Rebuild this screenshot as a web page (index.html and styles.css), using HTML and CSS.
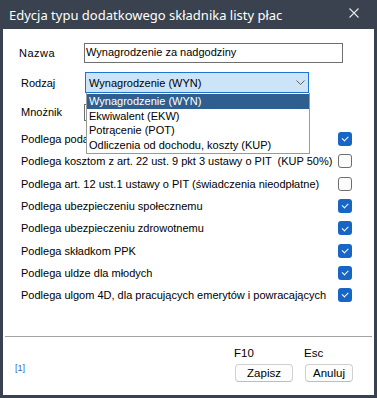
FILE: index.html
```html
<!doctype html>
<html lang="pl">
  <head>
    <meta charset="UTF-8" />
    <meta name="viewport" content="width=device-width, initial-scale=1.0" />
    <title>Edycja typu dodatkowego składnika listy płac</title>
    <link rel="stylesheet" href="styles.css">
  </head>
  <body>

    <div class="window">
      <div class="title-bar">
        <span class="title">Edycja typu dodatkowego składnika listy płac</span>
        <svg class="close" width="10" height="10" viewBox="0 0 10 10">
          <path d="M0.5 0.5 L9.5 9.5 M9.5 0.5 L0.5 9.5" stroke="#e6e8eb" stroke-width="1.1" fill="none" />
        </svg>
      </div>

      <div class="content">
        <div class="form-row row-name">
          <span class="label label-name">Nazwa</span>
          <div class="text-box name-box">Wynagrodzenie za nadgodziny</div>
        </div>

        <div class="form-row row-kind">
          <span class="label">Rodzaj</span>
          <div class="select-box">
            <span>Wynagrodzenie (WYN)</span>
            <svg width="9" height="5" viewBox="0 0 9 5">
              <path d="M0.5 0.5 L4.5 4.5 L8.5 0.5" stroke="#606060" stroke-width="1" fill="none" />
            </svg>
          </div>
          <!-- open dropdown lies over the rows below -->
          <div class="dropdown">
            <div class="option selected">Wynagrodzenie (WYN)</div>
            <div class="option">Ekwiwalent (EKW)</div>
            <div class="option">Potrącenie (POT)</div>
            <div class="option">Odliczenia od dochodu, koszty (KUP)</div>
          </div>
        </div>

        <div class="form-row row-mult">
          <span class="label">Mnożnik</span>
          <div class="text-box mult-box"></div>
        </div>

        <div class="checks">
          <div class="check-row">
            <span>Podlega podatkowi dochodowemu</span>
            <span class="check on"></span>
          </div>
          <div class="check-row">
            <span>Podlega kosztom z art. 22 ust. 9 pkt 3 ustawy o PIT &nbsp;(KUP 50%)</span>
            <span class="check"></span>
          </div>
          <div class="check-row">
            <span>Podlega art. 12 ust.1 ustawy o PIT (świadczenia nieodpłatne)</span>
            <span class="check"></span>
          </div>
          <div class="check-row">
            <span>Podlega ubezpieczeniu społecznemu</span>
            <span class="check on"></span>
          </div>
          <div class="check-row">
            <span>Podlega ubezpieczeniu zdrowotnemu</span>
            <span class="check on"></span>
          </div>
          <div class="check-row">
            <span>Podlega składkom PPK</span>
            <span class="check on"></span>
          </div>
          <div class="check-row">
            <span>Podlega uldze dla młodych</span>
            <span class="check on"></span>
          </div>
          <div class="check-row">
            <span>Podlega ulgom 4D, dla pracujących emerytów i powracających</span>
            <span class="check on"></span>
          </div>
        </div>

        <div class="separator"></div>

        <div class="footer">
          <span class="page-tag">[1]</span>
          <div class="actions">
            <div class="action">
              <span class="key">F10</span>
              <button class="btn btn-save">Zapisz</button>
            </div>
            <div class="action">
              <span class="key">Esc</span>
              <button class="btn btn-cancel">Anuluj</button>
            </div>
          </div>
        </div>
      </div>
    </div>

  </body>
</html>
```

FILE: styles.css
```css
body {
  margin: 0;
  background-color: #39424e;
  font-family: "Liberation Sans", Arial, sans-serif;
  font-size: 11px;
  color: #000000;
}

.window {
  width: 377px;
  height: 398px;
  background-color: #39424e;
  display: flex;
  flex-direction: column;
}

.title-bar {
  height: 29px;
  display: flex;
  align-items: center;
  justify-content: space-between;
  padding: 0 18px 0 9px;
}
.title {
  font-family: "Noto Sans", sans-serif;
  font-size: 13px;
  color: #ffffff;
  margin-top: 1px;
}
.close {
  margin-top: -3px;
}

.content {
  flex: 1;
  margin: 0 3px 3px 3px;
  background-color: #ffffff;
  padding: 14px 22px 0 18px;
  display: flex;
  flex-direction: column;
}

.form-row {
  display: flex;
  align-items: center;
  position: relative;
}
.label {
  width: 63px;
}
.label-name {
  margin-left: -2px;
  width: 65px;
  letter-spacing: 0.5px;
}

.text-box {
  box-sizing: border-box;
  border: 1px solid #6f6f6f;
  padding: 0 2px;
  line-height: 18px;
}
.row-name {
  height: 20px;
}
.name-box {
  width: 259px;
  height: 20px;
  line-height: 17px;
  padding-left: 1px;
}

.row-kind {
  height: 21px;
  margin-top: 9px;
}
.select-box {
  box-sizing: border-box;
  width: 224px;
  height: 21px;
  margin-left: 1px;
  background-color: #cce4f7;
  border: 1px solid #1f73d1;
  display: flex;
  align-items: center;
  justify-content: space-between;
  padding: 0 3px 0 3px;
}

.dropdown {
  position: absolute;
  left: 65px;
  top: 21px;
  width: 224px;
  box-sizing: border-box;
  background-color: #ffffff;
  border: 1px solid #9a9a9a;
  border-top: none;
  padding: 1px 0 1px 0;
  z-index: 2;
}
.option {
  height: 14.5px;
  line-height: 14.5px;
  padding-left: 2px;
}
.option.selected {
  background-color: #2f5f8f;
  color: #ffffff;
}

.row-mult {
  height: 18px;
  margin-top: 10px;
}
.mult-box {
  width: 120px;
  height: 17px;
}

.checks {
  margin-top: 7px;
}
.check-row {
  height: 22.3px;
  display: flex;
  align-items: center;
  justify-content: space-between;
  white-space: nowrap;
}
.check {
  box-sizing: border-box;
  flex-shrink: 0;
  width: 14px;
  height: 14px;
  border: 1px solid #6e6e6e;
  border-radius: 3px;
  background-color: #fbfbfb;
  display: flex;
  align-items: center;
  justify-content: center;
}
.check.on {
  border: none;
  background-color: #1766c6;
}
.check.on::after {
  content: "";
  width: 5px;
  height: 2.5px;
  border-left: 1px solid #ffffff;
  border-bottom: 1px solid #ffffff;
  transform: rotate(-45deg);
  margin-top: -2px;
}

.separator {
  margin: 30px -20px 0 -16px;
  border-top: 1px solid #a3a3a3;
}

.footer {
  display: flex;
  justify-content: space-between;
  align-items: flex-start;
  padding-top: 9px;
}
.page-tag {
  font-size: 9px;
  color: #2f62c0;
  margin: 17px 0 0 -6px;
}
.actions {
  display: flex;
  gap: 12px;
  margin-right: -1px;
}
.action {
  display: flex;
  flex-direction: column;
  align-items: flex-start;
}
.key {
  font-size: 11.5px;
  line-height: 14px;
  margin-left: -1px;
}
.btn {
  margin-top: 4px;
  height: 18px;
  padding: 0;
  font-family: "Liberation Sans", Arial, sans-serif;
  font-size: 11.5px;
  color: #000000;
  background-color: #fdfdfd;
  border: 1px solid #d0d0d0;
  border-bottom-color: #bdbdbd;
  border-radius: 4px;
}
.btn-save {
  width: 58px;
}
.btn-cancel {
  width: 48px;
}
```
